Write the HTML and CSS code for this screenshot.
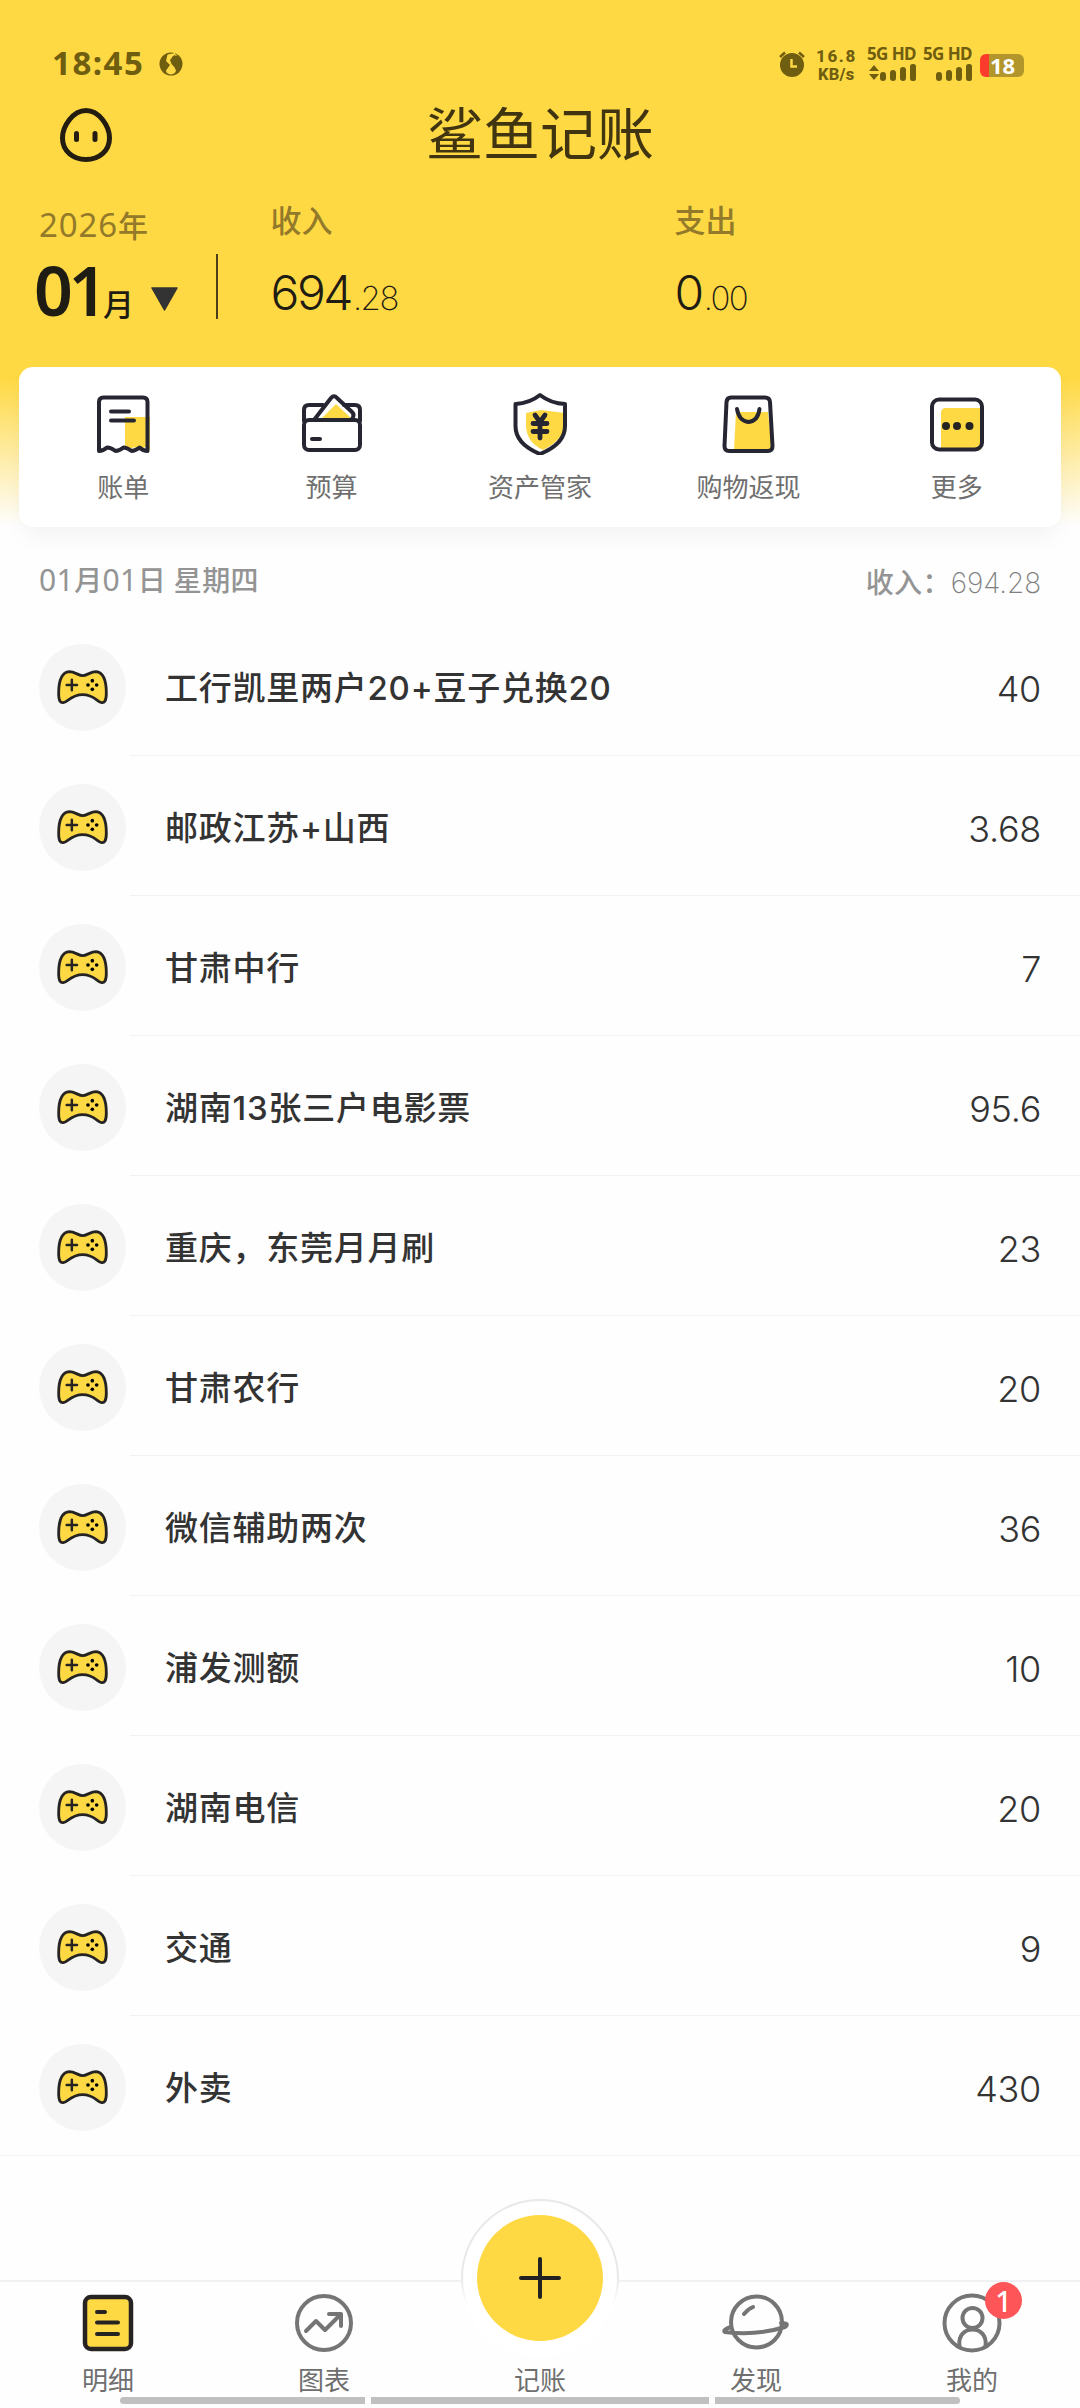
FILE: index.html
```html
<!DOCTYPE html>
<html lang="zh-CN">
<head>
<meta charset="utf-8">
<title>鲨鱼记账</title>
<link rel="stylesheet" href="styles.css">
</head>
<body>
<svg class="defs" aria-hidden="true">
  <symbol id="pad" viewBox="27 24 261 261">
    <path d="M118 107C134 107 146 119 158 119C170 119 182 107 198 107C222 109 229 142 229 172C229 195 223 201 215 200C202 198 192 176 158 176C124 176 113 198 100 200C91 201 86 195 86 172C86 142 93 109 118 107Z" fill="#ffd943" stroke="#262422" stroke-width="8.500"/>
    <path d="M110 147H141M125.500 131.500V162.500" stroke="#262422" stroke-width="7.500" stroke-linecap="round"/>
    <circle cx="187" cy="134" r="5.5"/><circle cx="187" cy="160" r="5.5"/><circle cx="174" cy="147" r="5.5"/><circle cx="200" cy="147" r="5.5"/>
  </symbol>
  <symbol id="bars" viewBox="0 0 36 17">
    <rect x="0" y="8" width="6" height="9" rx="3"/><rect x="10" y="6" width="6" height="11" rx="3"/><rect x="20" y="3" width="6" height="14" rx="3"/><rect x="30" y="0" width="6" height="17" rx="2.5"/>
  </symbol>
</svg>
<div class="screen">
  <header class="header">
    <div class="status">
      <span class="clock">18:45</span>
      <svg class="app-dot" viewBox="0 0 24 24"><circle cx="12" cy="12" r="11.5" fill="#6f5d10"/><path d="M16 1L8.500 2.500L7 9L11 13L7 18.500Q7 22 12 22.500Q16.500 22 17 18.500Q16 15 12.500 12L11 8L14 4.500L18 3.500Z" fill="#ffd943"/><path d="M13 5L17 2L14.500 7L17 13L13 9Z" fill="#6f5d10"/></svg>
      <svg class="alarm" viewBox="0 0 26 26"><circle cx="13" cy="14" r="12" fill="#6f5d10"/><path d="M1 6L6 1.500M25 6L20 1.500" stroke="#6f5d10" stroke-width="2.500"/><path d="M12.500 8V15.500H18" fill="none" stroke="#ffd943" stroke-width="2.500"/></svg>
      <div class="speed"><span>16.8</span><span>KB/s</span></div>
      <div class="signal"><span>5G HD</span><div class="levels"><svg class="updown" viewBox="0 0 10 15"><path d="M5 0L10 6H0ZM5 15L0 9H10Z"/></svg><svg class="lv"><use href="#bars"/></svg></div></div>
      <div class="signal second"><span>5G HD</span><div class="levels"><svg class="lv"><use href="#bars"/></svg></div></div>
      <div class="battery"><span>18</span></div>
    </div>
    <div class="titlebar">
      <svg class="face" viewBox="0 0 54 56"><path d="M27 3.500C40 3.500 50.500 19 50.500 31C50.500 44 40 52.500 27 52.500C14 52.500 3.500 44 3.500 31C3.500 19 14 3.500 27 3.500Z" fill="none" stroke="#221d10" stroke-width="5"/><path d="M17.500 26.500V32.500M36 26.500V32.500" stroke="#221d10" stroke-width="5" stroke-linecap="round"/></svg>
      <h1 class="logo">鲨鱼记账</h1>
    </div>
    <div class="summary">
      <div class="period">
        <div class="year"><span class="num">2026</span>年</div>
        <div class="month"><b>01</b><i>月</i><svg class="caret" viewBox="0 0 27 24"><path d="M1 1H26L13.500 23Z" fill="#333" stroke="#333" stroke-width="1.500" stroke-linejoin="round"/></svg></div>
      </div>
      <div class="rule"></div>
      <div class="total income"><span>收入</span><div class="money">694<small>.28</small></div></div>
      <div class="total"><span>支出</span><div class="money">0<small>.00</small></div></div>
    </div>
  </header>

  <nav class="tools">
    <a class="tool"><svg viewBox="0 0 64 64"><path d="M34 27H59V60L54 57L49 60L43 57L38 60L34 58Z" fill="#ffd943"/><path d="M8 61V12Q8 7.500 12.500 7.500H52Q56.500 7.500 56.500 12V61Q52 61 48.500 57.500Q44 61 40.500 61Q36 57.500 32.500 57.500Q28 61 24.500 61Q20 57.500 16 57.500Q12 61 8 61Z"/><path d="M20 21.500H38M20 30.500H43"/></svg><span>账单</span></a>
    <a class="tool"><svg viewBox="0 0 64 64"><path d="M21 29L36 14L52 29Z" fill="#ffd943"/><path d="M4 31V20Q4 15 9 15H23M44 15H55Q60 15 60 20V31"/><rect x="4" y="30" width="56" height="30" rx="5"/><path d="M14 30L31 8Q34 4.500 37 8L52 22Q55 25 52 29"/><path d="M12 49H20"/></svg><span>预算</span></a>
    <a class="tool"><svg viewBox="0 0 64 64"><path d="M18 23L33 20L57 23V35Q55 50 35 60Q18 52 18 35Z" fill="#ffd943"/><path d="M32 5Q43 13.500 57 14V36Q57 54 32 64Q7.500 54 7.500 36V14Q22 13 32 5Z"/><path d="M27 25L32 32L37 25M25 33.500H39M25 41.500H39M32 33V48" stroke-width="4.800"/></svg><span>资产管家</span></a>
    <a class="tool"><svg viewBox="0 0 64 64"><path d="M20 22H52L56 60H18Z" fill="#ffd943"/><path d="M15 7.500H49Q53.500 7.500 54 12L56.500 56Q56.500 61 52 61H13Q8.500 61 8.500 56L10.500 12Q11 7.500 15 7.500Z"/><path d="M21 19Q23 31 32.500 32Q42 31 43.500 19"/></svg><span>购物返现</span></a>
    <a class="tool"><svg viewBox="0 0 64 64"><path d="M16 23Q16 18 21 18H56V60H16Z" fill="#ffd943"/><rect x="7" y="9.500" width="50" height="50" rx="7"/><g fill="#262422" stroke="none"><circle cx="21" cy="36" r="4"/><circle cx="32" cy="36" r="4"/><circle cx="44.500" cy="36" r="4"/></g></svg><span>更多</span></a>
  </nav>

  <main class="ledger">
    <div class="day"><span><span class="dnum">01</span>月<span class="dnum">01</span>日 <span class="week">星期四</span></span><span class="day-total">收入：<em>694.28</em></span></div>
    <ul class="rows">
      <li><span class="ico"><svg><use href="#pad"/></svg></span><div class="name">工行凯里两户20+豆子兑换20</div><div class="amt">40</div></li>
      <li><span class="ico"><svg><use href="#pad"/></svg></span><div class="name">邮政江苏+山西</div><div class="amt">3.68</div></li>
      <li><span class="ico"><svg><use href="#pad"/></svg></span><div class="name">甘肃中行</div><div class="amt">7</div></li>
      <li><span class="ico"><svg><use href="#pad"/></svg></span><div class="name">湖南13张三户电影票</div><div class="amt">95.6</div></li>
      <li><span class="ico"><svg><use href="#pad"/></svg></span><div class="name">重庆，东莞月月刷</div><div class="amt">23</div></li>
      <li><span class="ico"><svg><use href="#pad"/></svg></span><div class="name">甘肃农行</div><div class="amt">20</div></li>
      <li><span class="ico"><svg><use href="#pad"/></svg></span><div class="name">微信辅助两次</div><div class="amt">36</div></li>
      <li><span class="ico"><svg><use href="#pad"/></svg></span><div class="name">浦发测额</div><div class="amt">10</div></li>
      <li><span class="ico"><svg><use href="#pad"/></svg></span><div class="name">湖南电信</div><div class="amt">20</div></li>
      <li><span class="ico"><svg><use href="#pad"/></svg></span><div class="name">交通</div><div class="amt">9</div></li>
      <li><span class="ico"><svg><use href="#pad"/></svg></span><div class="name">外卖</div><div class="amt">430</div></li>
    </ul>
  </main>

  <nav class="tabs">
    <a class="tab"><svg viewBox="0 0 68 64"><rect x="11" y="7" width="46" height="52" rx="6" fill="#ffd943" stroke="#262422" stroke-width="4.500"/><path d="M23 22H31M23 32.500H44M23 44H44" stroke="#262422" stroke-width="4"/></svg><span>明细</span></a>
    <a class="tab"><svg viewBox="0 0 68 64"><circle cx="34" cy="33" r="27"/><path d="M16 41L26 31L35 40L51 24M39 24H51V36"/></svg><span>图表</span></a>
    <a class="tab"><svg viewBox="0 0 68 64"></svg><span>记账</span></a>
    <a class="tab"><svg viewBox="0 0 68 64"><circle cx="34.500" cy="32" r="25.500"/><path d="M9 37Q0 40 3 42Q34 46 63 37Q68 33 59 33M22 24Q26 19 31 17"/></svg><span>发现</span></a>
    <a class="tab"><svg viewBox="0 0 68 64"><circle cx="34" cy="33" r="27.500"/><circle cx="34.500" cy="28" r="10"/><path d="M21.500 56C20 45 27 39.500 34.500 39.500C42 39.500 49 45 47.500 56"/></svg><span>我的</span><em class="badge">1</em></a>
    <svg class="fab" viewBox="0 0 160 160"><defs><linearGradient id="fade" x1="0" y1="0" x2="0" y2="1"><stop offset=".5" stop-color="#e8e8ea"/><stop offset=".68" stop-color="#fff"/></linearGradient></defs><circle cx="80" cy="80" r="78" fill="#fff" stroke="url(#fade)" stroke-width="2"/><circle cx="80" cy="80" r="63" fill="#ffd943"/><path d="M61 80H99M80 61V99" stroke="#222" stroke-width="4" stroke-linecap="round"/></svg>
  </nav>
  <div class="gesture"><i></i><i></i><i></i></div>
</div>
</body>
</html>
```
FILE: styles.css
```css
* { box-sizing: border-box; margin: 0; padding: 0; }
body {
  width: 1080px;
  background: #fefefe;
  font-family: "Noto Sans", "Noto Sans CJK SC", sans-serif;
  color: #333;
}
.defs { display: none; }
svg { display: block; flex: none; }
.screen { width: 1080px; height: 2408px; display: flex; flex-direction: column; overflow: hidden; }
.header {
  height: 530px;
  flex: none;
  background: linear-gradient(#ffd943 0, #ffd943 378px, #fefefe 526px);
}

/* status bar */
.status { height: 100px; padding: 0 52px 0 52px; display: flex; align-items: flex-start; color: #6f5d10; fill: #6f5d10; }
.clock { font-weight: 700; font-size: 33px; line-height: 40px; letter-spacing: 1.5px; padding-top: 43px; width: 107px; }
.app-dot { width: 24px; height: 24px; margin-top: 52px; }
.alarm { width: 26px; height: 26px; margin: 51px 11px 0 596px; }
.speed { width: 51px; padding-top: 47px; display: flex; flex-direction: column; font-family: Roboto, sans-serif; font-size: 17px; font-weight: 800; letter-spacing: 1.6px; }
.speed span { line-height: 19px; }
.speed span + span { font-size: 16.5px; line-height: 19px; letter-spacing: .2px; padding-left: 2px; margin-top: -1px; }
.signal { width: 49px; padding-top: 45px; font-size: 17px; line-height: 18px; font-weight: 700; white-space: nowrap; letter-spacing: -.6px; margin-right: 7px; }
.levels { display: flex; justify-content: flex-end; gap: 1px; padding-top: 1px; }
.updown { width: 10px; height: 15px; margin-top: 1px; }
.lv { width: 36px; height: 17px; }
.battery {
  width: 44px; height: 23px; margin: 54px 0 0 1px; border-radius: 6px;
  background: linear-gradient(90deg, #fb3b2c 9px, #b3962b 9px);
  color: #fff; font-weight: 700; font-size: 22px; line-height: 23px; padding-left: 10px;
}

/* title */
.titlebar { height: 92px; display: flex; padding-left: 59px; }
.face { width: 54px; height: 56px; margin-top: 7px; }
.logo { margin: 0 0 0 313px; font: 400 57px/60px "Noto Sans CJK SC", sans-serif; color: #403510; white-space: nowrap; }

/* month summary */
.summary { display: flex; align-items: flex-start; }
.period { width: 216px; padding-left: 34px; }
.year { padding: 13px 0 0 5px; font-size: 30px; line-height: 40px; color: #93792a; font-weight: 500; white-space: nowrap; }
.year .num { font-size: 33px; font-weight: 400; letter-spacing: .9px; }
.month { display: flex; align-items: baseline; line-height: 80px; height: 80px; margin-top: 4px; color: #1f1c14; }
.month b { font-size: 68px; font-weight: 600; letter-spacing: -4.5px; width: 69px; }
.month i { font-style: normal; font-size: 31px; font-weight: 500; width: 48px; }
.caret { width: 27px; height: 24px; align-self: center; margin-top: 17px; }
.rule { width: 1.5px; height: 65px; margin-top: 62px; background: #4a3f18; }
.total { color: #1f1c14; }
.income { width: 404px; margin-left: 53px; }
.total > span { display: block; padding-top: 8px; font-size: 31px; line-height: 40px; font-weight: 500; color: #93792a; }
.money { font: 300 48px/60px Inter, sans-serif; letter-spacing: -2.5px; margin-top: 23px; white-space: nowrap; }
.money small { font-size: 33px; font-weight: 250; letter-spacing: -1.5px; margin-left: 2px; }

/* shortcuts */
.tools {
  width: 1042px; height: 160px; flex: none; margin: -163px 19px 0; border-radius: 14px; background: #fff;
  display: flex; box-shadow: 0 12px 24px -4px rgba(0, 0, 0, .05);
}
.tool { flex: 1; display: flex; flex-direction: column; align-items: center; padding-top: 22px; font-size: 26px; line-height: 38px; color: #6f6f6f; }
.tool svg { width: 64px; height: 66px; fill: none; stroke: #262633; stroke-width: 4; stroke-linecap: round; stroke-linejoin: round; }
.tool svg path[fill="#ffd943"] { stroke: none; }
.tool span { margin-top: 13px; }

/* ledger */
.day { height: 89px; padding: 31px 39px 0 39px; display: flex; justify-content: space-between; font-size: 28px; line-height: 44px; letter-spacing: .4px; color: #949494; font-weight: 500; white-space: nowrap; }
.dnum { font-size: 30px; font-weight: 400; }
.day-total { padding-top: 2px; }
.day-total em { font: 250 28px/40px Inter, sans-serif; letter-spacing: -.1px; color: #808080; }
.rows { list-style: none; }
.rows li { height: 140px; display: flex; align-items: center; padding: 2px 39px 0; background: linear-gradient(#f2f2f2, #f2f2f2) 130px 100% / 100% 1.5px no-repeat; }
.rows li:last-child { background-position-x: 0; }
.ico { width: 87px; height: 87px; border-radius: 50%; background: #f5f5f5; flex: none; }
.ico svg { width: 87px; height: 87px; }
.name { flex: 1; padding: 2px 0 0 39px; font-family: Inter, "Noto Sans CJK SC", sans-serif; font-size: 33px; line-height: 48px; font-weight: 500; letter-spacing: .75px; white-space: nowrap; }
.amt { font: 300 36px/48px Inter, sans-serif; letter-spacing: -.3px; padding-top: 4px; }

/* tab bar */
.tabs { position: relative; margin-top: 124px; height: 116px; flex: none; border-top: 2px solid #f1f1f3; display: flex; }
.tab { position: relative; flex: 1; display: flex; flex-direction: column; align-items: center; padding-top: 8px; font-size: 26px; line-height: 38px; color: #6f6f6f; }
.tab svg { width: 68px; height: 64px; fill: none; stroke: #757575; stroke-width: 4; stroke-linecap: round; stroke-linejoin: round; }
.tab span { margin-top: 7px; }
.badge { position: absolute; left: 121px; top: 0; width: 37px; height: 37px; border-radius: 50%; background: #fd5558; color: #fff; font-style: normal; font-size: 29px; font-weight: 500; line-height: 37px; text-align: center; }
.fab { position: absolute; left: 460px; top: -84px; width: 160px; height: 160px; }
.gesture { display: flex; gap: 6px; height: 7px; width: 840px; margin: 1px 0 0 120px; flex: none; }
.gesture i { background: #c0c0c0; flex: 245 0 0; }
.gesture i:nth-child(2) { flex-grow: 338; }
.gesture i:first-child { border-radius: 4px 0 0 4px; }
.gesture i:last-child { border-radius: 0 4px 4px 0; }
```
